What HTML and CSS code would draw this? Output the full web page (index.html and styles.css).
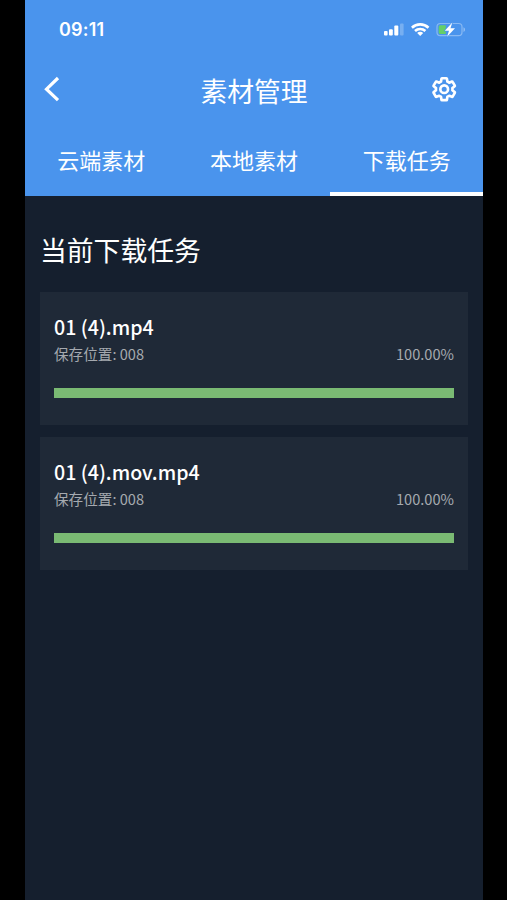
FILE: index.html
```html
<!DOCTYPE html>
<html lang="zh-CN">
<head>
<meta charset="utf-8">
<meta name="viewport" content="width=device-width, initial-scale=1">
<title>素材管理</title>
<link rel="stylesheet" href="styles.css">
</head>
<body>
<div class="phone">
  <header class="header">
    <div class="status">
      <span class="time">09:11</span>
      <svg class="status-icons" width="84" height="18" viewBox="0 0 84 18" fill="#fff">
        <rect x="1" y="10" width="3.6" height="4.600" rx="1"/>
        <rect x="6" y="8.200" width="3.800" height="6.400" rx="1"/>
        <rect x="11.300" y="4.500" width="4" height="10.100" rx="1"/>
        <rect x="17" y="2.500" width="3.600" height="12.100" rx="1" opacity=".25"/>
        <g fill="none" stroke="#fff" stroke-width="2.600">
          <path d="M28.900 6.700a12 12 0 0 1 16.600 0"/>
          <path d="M32 10a7.600 7.600 0 0 1 10.400 0"/>
        </g>
        <path d="M37.200 15.100l-3-3a4.200 4.200 0 0 1 6 0z"/>
        <rect x="54" y="2.500" width="25" height="12.200" rx="3.400" fill="none" stroke="#fff" stroke-opacity=".35" stroke-width="1.200"/>
        <path d="M80.500 6.300c2 .8 2 3.800 0 4.600z" opacity=".4"/>
        <path d="M57.200 4.200h5.600v8.800h-5.600a1.500 1.500 0 0 1-1.500-1.500V5.700a1.500 1.500 0 0 1 1.500-1.500z" fill="#65cf68"/>
        <path d="M69.300 1.500L61.800 9.700h4.200l-1.900 6L72 7.300h-4.500z" stroke="#4a94ed" stroke-width="1.200" paint-order="stroke"/>
      </svg>
    </div>
    <div class="navbar">
      <svg class="back" width="18" height="28" viewBox="0 0 18 28" fill="none" stroke="#fff" stroke-width="3.200"><path d="M15 3L3.500 14.200l11.500 11"/></svg>
      <h1 class="title">素材管理</h1>
      <svg class="gear" width="26.400" height="26.400" viewBox="0 0 24 24" fill="none" stroke="#fff" stroke-width="2.400" stroke-linejoin="round">
        <path d="M19.430 12.980c.04-.32.07-.64.07-.98s-.03-.66-.07-.98l2.110-1.650c.19-.15.24-.42.12-.64l-2-3.460c-.12-.22-.38-.3-.61-.22l-2.490 1c-.52-.4-1.080-.73-1.690-.98l-.38-2.650A.49.49 0 0 0 14 2h-4a.49.49 0 0 0-.49.42l-.38 2.650c-.61.25-1.170.59-1.690.98l-2.490-1a.49.49 0 0 0-.61.22l-2 3.460c-.13.22-.07.49.12.64l2.110 1.650c-.04.32-.07.65-.07.98s.03.66.07.98l-2.110 1.650a.49.49 0 0 0-.12.64l2 3.460c.12.22.38.3.61.22l2.490-1c.52.4 1.080.73 1.690.98l.38 2.650c.03.24.24.42.49.42h4c.25 0 .46-.18.49-.42l.38-2.650c.61-.25 1.170-.59 1.690-.98l2.490 1c.23.09.49 0 .61-.22l2-3.460a.49.49 0 0 0-.12-.64z"/>
        <circle cx="12" cy="12" r="3.500"/>
      </svg>
    </div>
    <nav class="tabs">
      <a class="tab">云端素材</a>
      <a class="tab">本地素材</a>
      <a class="tab active">下载任务</a>
    </nav>
  </header>
  <main class="content">
    <h2 class="heading">当前下载任务</h2>
    <section class="card">
      <div class="name">01 (4).mp4</div>
      <div class="meta"><span>保存位置: 008</span><span>100.00%</span></div>
      <div class="bar"></div>
    </section>
    <section class="card">
      <div class="name">01 (4).mov.mp4</div>
      <div class="meta"><span>保存位置: 008</span><span>100.00%</span></div>
      <div class="bar"></div>
    </section>
  </main>
</div>
</body>
</html>
```

FILE: styles.css
```css
* { box-sizing: border-box; }
body {
  margin: 0;
  background: #000;
  font-family: "Noto Sans CJK SC", sans-serif;
  color: #fff;
}
.phone {
  width: 458px;
  height: 900px;
  margin: 0 auto 0 25px;
  background: #151f2e;
}
.header {
  height: 196px;
  background: #4a94ed;
  display: flex;
  flex-direction: column;
}
.status {
  height: 58px;
  padding: 0 16px 0 34px;
  display: flex;
  align-items: center;
  justify-content: space-between;
}
.time {
  margin-top: 2px;
  font: 600 18px/20px Inter, sans-serif;
  letter-spacing: 0.2px;
}
.status-icons { margin-top: 2px; }
.navbar {
  height: 66px;
  padding: 0 26px 0 18px;
  display: grid;
  grid-template-columns: 60px 1fr 52px;
  align-items: center;
}
.back { margin-top: -4px; }
.title {
  margin: 0;
  font-size: 26.8px;
  line-height: 40px;
  font-weight: 400;
  text-align: center;
}
.gear {
  justify-self: end;
  margin-top: -4px;
  overflow: visible;
}
.tabs {
  flex: 1;
  display: grid;
  grid-template-columns: repeat(3, 1fr);
}
.tab {
  border-bottom: 4px solid transparent;
  font-size: 22px;
  line-height: 70px;
  height: 72px;
  text-align: center;
}
.active { border-color: #fff; }
.content { padding: 34px 15px 0; }
.heading {
  margin: 0 0 22px;
  font-size: 26.8px;
  line-height: 40px;
  font-weight: 400;
}
.card {
  height: 133px;
  margin-bottom: 12px;
  padding: 20px 14px 0;
  background: #1f2937;
}
.name {
  font-size: 19.6px;
  line-height: 30px;
  font-weight: 500;
}
.meta {
  display: flex;
  justify-content: space-between;
  margin-top: 1px;
  font-size: 14.6px;
  line-height: 22px;
  color: #a5a9af;
}
.bar {
  height: 10px;
  margin-top: 23px;
  background: #7aba73;
}
```
